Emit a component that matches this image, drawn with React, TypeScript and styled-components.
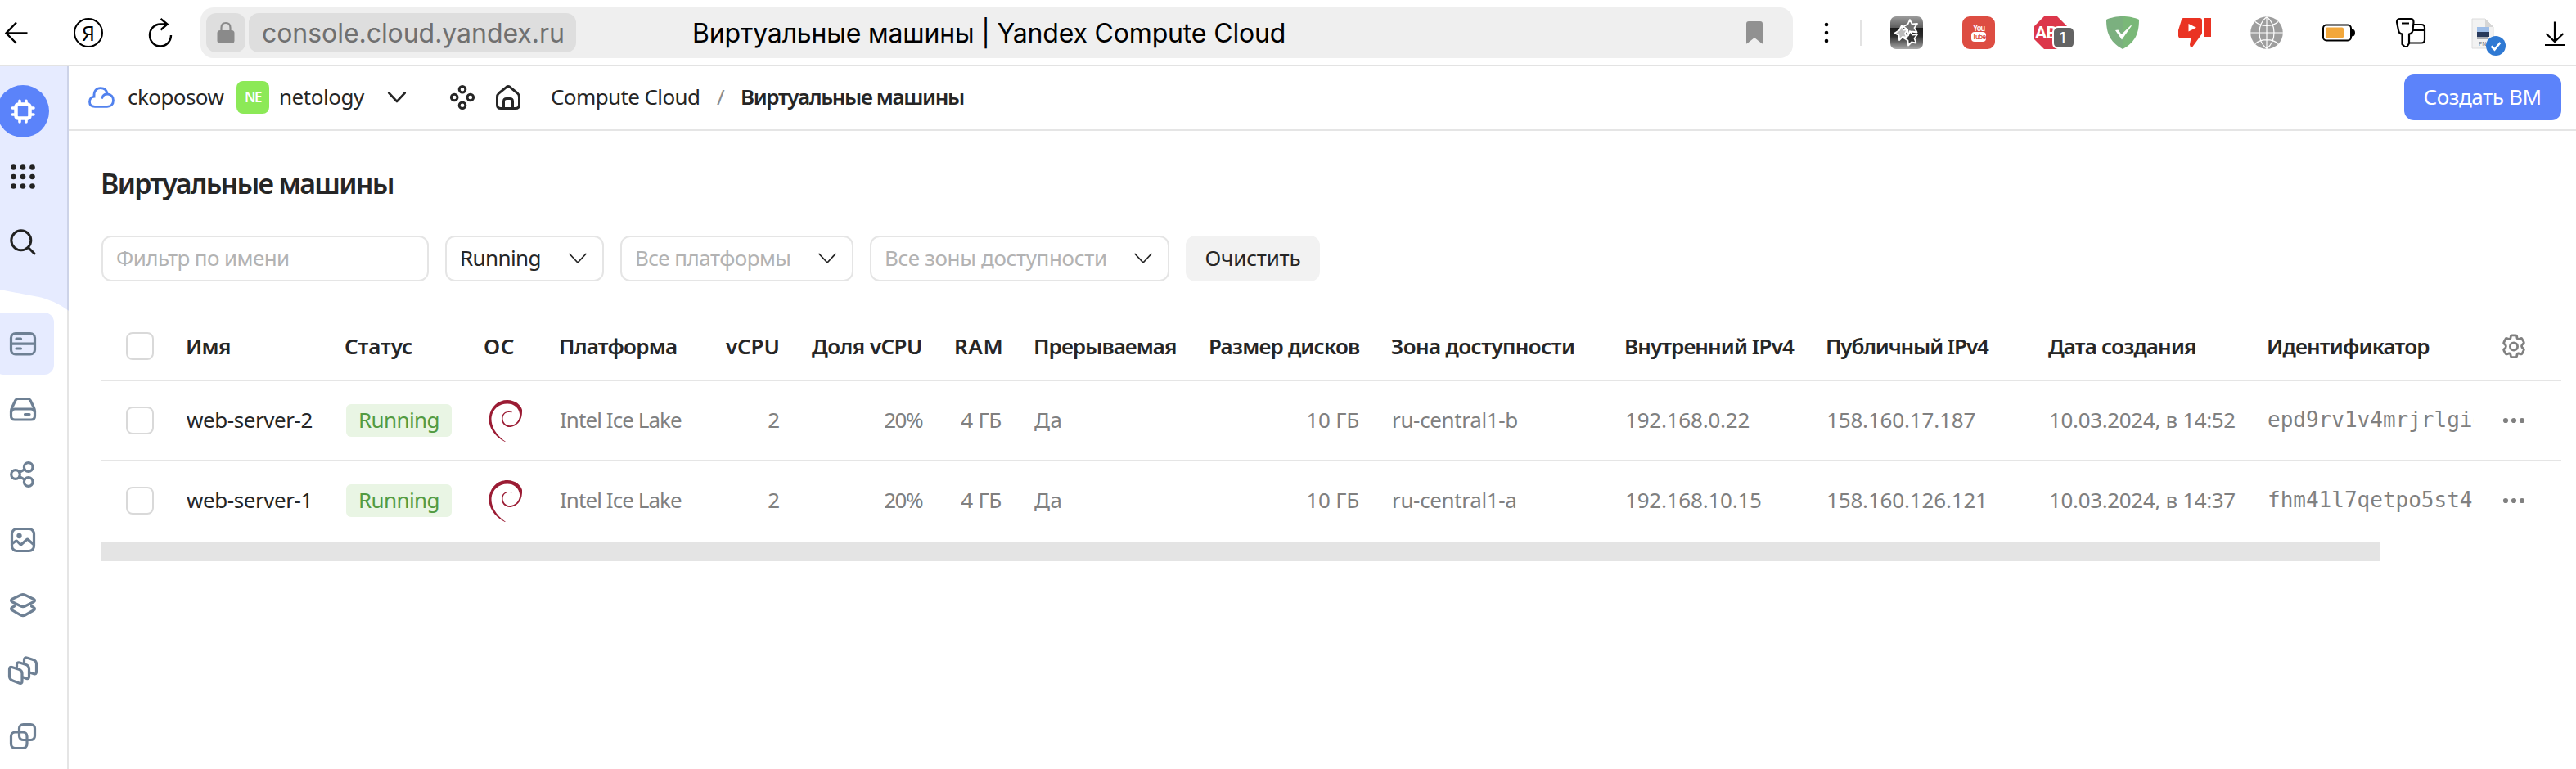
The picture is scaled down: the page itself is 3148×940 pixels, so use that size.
import React from 'react';
import styled, { createGlobalStyle, css } from 'styled-components';

const GlobalStyle = createGlobalStyle`
  * { box-sizing: border-box; }
  html, body { margin: 0; padding: 0; background: #fff; }
  body { font-family: "Noto Sans", "Open Sans", sans-serif; font-size: 26px; color: #262626; overflow: hidden; }
  svg { display: block; flex: none; overflow: visible; }
`;

const Page = styled.div`
  width: 3148px;
  height: 940px;
  display: grid;
  grid-template-rows: 81px 1fr;
  overflow: hidden;
`;

const Text = styled.span<{ $track?: number }>`
  white-space: pre;
  letter-spacing: ${p => p.$track ?? 0}px;
`;

/* ---------- Browser toolbar ---------- */

const Toolbar = styled.div`
  display: grid;
  grid-template-columns: 84px 92px 63px 1946px 82px 13px 880px;
  align-items: center;
  padding-left: 6px;
  border-bottom: 1px solid #e3e3e3;
  overflow: hidden;
`;

const YandexButton = styled.div`
  width: 36px;
  height: 36px;
  border: 2px solid #000;
  border-radius: 50%;
  display: flex;
  align-items: center;
  justify-content: center;
  color: #000;
  font-size: 25px;
  font-weight: 400;
  line-height: 28px;
`;

const AddressBar = styled.div`
  height: 62px;
  padding: 0 37px 0 7px;
  border-radius: 16px;
  background: #efefef;
  display: flex;
  align-items: center;
  font-family: Inter, "Noto Sans", sans-serif;
  font-size: 32px;
`;

const LockChip = styled.div`
  width: 48px;
  height: 48px;
  border-radius: 12px;
  background: #dedede;
  display: flex;
  align-items: center;
  justify-content: center;
`;

const UrlChip = styled.div`
  width: 400px;
  height: 48px;
  margin-left: 4px;
  padding: 1px 0 0 16px;
  border-radius: 12px;
  background: #dedede;
  color: #707070;
  line-height: 47px;
`;

const PageTitle = styled.div`
  flex: 1;
  padding: 1px 0 0 142px;
  color: #000;
`;

const MenuDots = styled.svg`
  margin-left: 38px;
`;

const Divider = styled.div`
  width: 2px;
  height: 32px;
  background: #e3e3e3;
`;

const Extensions = styled.div`
  display: grid;
  grid-template-columns: repeat(10, 88px);
  justify-items: center;
  align-items: center;
`;

const ExtensionTile = styled.div<{ $kind: 'stars' | 'tube' }>`
  width: 40px;
  height: 40px;
  display: flex;
  flex-direction: column;
  align-items: center;
  justify-content: center;
  font-family: Roboto, sans-serif;
  ${p => p.$kind === 'stars'
    ? css`border-radius: 7px; background: linear-gradient(#9c9c9c 0, #5d5d5d 35%, #1c1c1c 36%, #2b2b2b 60%, #aaa 100%);`
    : css`border-radius: 9px; background: #dd4d42;`}
`;

const YouWord = styled.span`
  color: #fff;
  font-size: 10px;
  line-height: 9px;
  font-weight: 500;
  letter-spacing: -1px;
`;

const TubeWord = styled(YouWord)`
  width: 18px;
  line-height: 12px;
  border-radius: 4px;
  background: #fff;
  color: #dd4d42;
  font-size: 9px;
  text-align: center;
`;

const BadgeHolder = styled.div`
  position: relative;
  width: 40px;
  height: 40px;
`;

const AbpLabel = styled.span`
  position: absolute;
  left: 1px;
  top: 9px;
  color: #fff;
  font-family: Roboto, sans-serif;
  font-size: 21px;
  line-height: 22px;
  font-weight: 700;
  letter-spacing: -0.5px;
`;

const CountBadge = styled.span`
  position: absolute;
  left: 22px;
  top: 12px;
  width: 28px;
  height: 28px;
  border: 2px solid #fff;
  border-radius: 7px;
  background: #636363;
  color: #fff;
  font-family: Inter, sans-serif;
  font-size: 18px;
  font-weight: 500;
  line-height: 25px;
  padding-right: 3px;
  text-align: center;
`;

/* ---------- Console shell ---------- */

const Shell = styled.div`
  display: grid;
  grid-template-columns: 84px 1fr;
  min-height: 0;
`;

const Sidebar = styled.nav`
  display: flex;
  flex-direction: column;
  border-right: 2px solid #e5e5e5;
  background: #fff;
`;

const SidebarTop = styled.div`
  margin-right: -2px;
  height: 273px;
  padding-top: 15px;
  background: #e6ebff;
  border-right: 2px solid #cdd3e8;
`;

const NavSlot = styled.div`
  width: 56px;
  height: 80px;
  display: flex;
  align-items: center;
  justify-content: center;
`;

const ServiceLogo = styled.div`
  flex: none;
  width: 64px;
  height: 64px;
  border-radius: 50%;
  background: #5b83fa;
  display: flex;
  align-items: center;
  justify-content: center;
`;

const NavItem = styled.div<{ $active?: boolean }>`
  width: 74px;
  height: 76px;
  margin: 2px 0 2px -8px;
  padding-left: 20px;
  display: flex;
  align-items: center;
  border-radius: 12px;
  background: ${p => (p.$active ? '#e6ebff' : 'transparent')};
`;

const Content = styled.main`
  display: grid;
  grid-template-rows: 79px 1fr;
  min-width: 0;
`;

const Header = styled.header`
  display: grid;
  grid-template-columns: 48px 134px 51px 133px 76px 56px 67px 203px 29px 1fr 192px;
  align-items: center;
  padding: 0 18px 2px 24px;
  border-bottom: 2px solid #e5e5e5;
`;

const HeaderLabel = styled(Text)<{ $strong?: boolean; $muted?: boolean }>`
  line-height: 36px;
  padding-bottom: 2px;
  font-weight: ${p => (p.$strong ? 600 : 400)};
  color: ${p => (p.$muted ? '#8c8c8c' : '#262626')};
`;

const FolderBadge = styled.div`
  width: 40px;
  height: 40px;
  margin-left: -1px;
  border-radius: 8px;
  background: #8ce957;
  color: #fff;
  font-size: 17px;
  font-weight: 600;
  line-height: 40px;
  letter-spacing: -1.4px;
  text-align: center;
`;

const PrimaryButton = styled.button`
  height: 56px;
  padding: 0 1px 2px 0;
  border: 0;
  border-radius: 12px;
  background: #5c83fa;
  color: #fff;
  font: 400 26px "Noto Sans", sans-serif;
  letter-spacing: -0.41px;
`;

const Body = styled.section`
  padding: 44px 18px 0 40px;
`;

const Heading = styled.h1`
  margin: 0 0 44px -1px;
  font-size: 34px;
  font-weight: 600;
  line-height: 40px;
  letter-spacing: -1.74px;
`;

const Filters = styled.div`
  display: flex;
  gap: 20px;
  height: 56px;
`;

const Field = styled.div<{ $width: number; $filled?: boolean }>`
  width: ${p => p.$width}px;
  height: 56px;
  padding: 0 19px 0 16px;
  border: 2px solid #e5e5e5;
  border-radius: 12px;
  display: flex;
  align-items: center;
  justify-content: space-between;
  color: ${p => (p.$filled ? '#262626' : '#b3b3b3')};
`;

const FieldText = styled(Text)`
  line-height: 36px;
  padding-bottom: 2px;
`;

const ClearButton = styled.button`
  width: 164px;
  height: 56px;
  margin: 0;
  padding: 0 0 2px;
  border: 0;
  border-radius: 12px;
  background: #f2f2f2;
  color: #262626;
  font: 400 26px "Noto Sans", sans-serif;
  letter-spacing: -0.2px;
`;

/* ---------- Table ---------- */

const Table = styled.div`
  margin-top: 38px;
`;

const Row = styled.div<{ $head?: boolean; $last?: boolean }>`
  display: grid;
  grid-template-columns: 84px 194px 170px 92px 204px 105px 174px 97px 214px 223px 285px 246px 272px 267px 273px 106px;
  align-items: center;
  height: ${p => (p.$head ? 84 : 98)}px;
  border-bottom: 2px solid ${p => (p.$last ? 'transparent' : '#e5e5e5')};
`;

const Cell = styled.div<{ $right?: boolean; $dark?: boolean }>`
  padding: 0 20px 2px;
  min-width: 0;
  line-height: 36px;
  color: ${p => (p.$dark ? '#262626' : '#808080')};
  text-align: ${p => (p.$right ? 'right' : 'left')};
`;

const HeadCell = styled(Cell)`
  padding: 0 21px 0 19px;
  color: #262626;
  font-weight: 600;
`;

const IdCell = styled(Cell)`
  padding: 0 0 2px;
  margin: 0 1px 0 20px;
  overflow: hidden;
  font-family: "DejaVu Sans Mono", monospace;
`;

const IconCell = styled.div<{ $pad: number }>`
  padding-left: ${p => p.$pad}px;
`;

const Checkbox = styled.div`
  width: 34px;
  height: 34px;
  margin-left: 30px;
  border: 2px solid #d9d9d9;
  border-radius: 8px;
`;

const StatusBadge = styled.div`
  width: 129px;
  height: 40px;
  margin-left: 21px;
  border-radius: 6px;
  background: #e9f5e4;
  color: #539b42;
  line-height: 38px;
  text-align: center;
  letter-spacing: -0.61px;
`;

const ScrollThumb = styled.div`
  width: 2785px;
  height: 24px;
  background: #e4e4e4;
`;

/* ---------- Icons ---------- */

const Chevron = ({ width = 1.8 }: { width?: number }) => (
  <svg width="22" height="14" viewBox="0 0 22 14" fill="none" stroke="#262626" strokeWidth={width} strokeLinecap="round" strokeLinejoin="round">
    <path d="M1.2 1.5 11 12 20.8 1.5" />
  </svg>
);

const Debian = () => (
  <svg width="52" height="52" viewBox="0 0 52 52" fill="#9b1c34">
    <path d="M25 52C11 45 5 33 5.5 24C6.5 9 17 .8 28 1C38 1.3 44.5 7 46 13C46.6 24 42 32 32 34C25 34.5 20.5 29 21 23C21.5 17 26 13.5 34 15.6L33 16.4C27 15 23 17.5 22.5 23C22.3 28 26 32 31 32.2C38 32 43 26 43.2 19C42 10 36 5.5 28 5.5C18 5.5 9.5 12 8.5 23C8 32 13 43 26 52Z" />
  </svg>
);

const navStroke = { fill: 'none', stroke: '#6e8094', strokeWidth: 3.2, strokeLinejoin: 'round' as const, strokeLinecap: 'round' as const };

const ServerIcon = () => (
  <svg width="32" height="32" viewBox="0 0 32 32" {...navStroke}>
    <rect x="1.5" y="3.5" width="29" height="25.5" rx="5.5" />
    <path d="M2 16.2h28M8 10.2h5.5M8 22h5.5" />
  </svg>
);
const DiskIcon = () => (
  <svg width="32" height="32" viewBox="0 0 32 32" {...navStroke}>
    <path d="M9.8 3.5h12.4q2 0 3 2l4 8.5q1.3 2.5 1.3 5v5.500q0 4.500-4.500 4.500h-20q-4.500 0-4.500-4.500V19q0-2.500 1.300-5l4-8.500q1-2 3-2Z" />
    <path d="M2 19q1-3 4-3h20q3 0 4 3M18.500 22.500h5.500" />
  </svg>
);
const ShareIcon = () => (
  <svg width="32" height="32" viewBox="0 0 32 32" {...navStroke}>
    <circle cx="7" cy="16" r="5.300" /><circle cx="22.700" cy="7" r="5.300" /><circle cx="22.700" cy="25" r="5.300" />
    <path d="m11.800 13.400 6.200-3.600M11.800 18.600l6.200 3.600" />
  </svg>
);
const ImageIcon = () => (
  <svg width="32" height="32" viewBox="0 0 32 32" {...navStroke}>
    <rect x="2.500" y="2.500" width="27" height="27" rx="6" />
    <path d="m3 20.500 4-3q1-.8 2 .2l4.500 4.300 7-6.300q1-.9 2 0l6.500 5.800" />
    <circle cx="11.500" cy="11" r="3.200" fill="#6e8094" stroke="none" />
  </svg>
);
const LayersIcon = () => (
  <svg width="32" height="32" viewBox="0 0 32 32" {...navStroke}>
    <path d="M13.500 3.200q2.500-1.200 5 0l10.500 5q3 1.800 0 3.600l-10.500 5.200q-2.500 1.200-5 0L3 11.800q-3-1.800 0-3.600Z" />
    <path d="M5.500 17 3 18.400q-3 1.800 0 3.600l10.500 6q2.500 1.200 5 0l10.500-6q3-1.800 0-3.600L26.500 17" />
  </svg>
);
const StackIcon = () => (
  <svg width="36" height="36" viewBox="2 0 36 36" {...navStroke}>
    <path d="M4.500 13.500 13 16.200q4 1.300 4 5V31q0 3-3 2.200L5.500 30Q1.500 28.500 1.500 24.500V16q0-3.300 3-2.500Z" />
    <path d="M10.500 13V11q0-4 3.500-3L21 10.200q4.500 1.300 4.500 5.300V25q0 3.200-3 2.500l-5-1.800" />
    <path d="M19.500 8V5q0-4 4-2.800L30.500 4.500q4 1.300 4 5.300v9.500q0 3.200-3 2.500l-5.500-1.800" />
  </svg>
);
const GroupIcon = () => (
  <svg width="32" height="32" viewBox="0 0 32 32" {...navStroke}>
    <rect x="11.500" y="1.500" width="19" height="19" rx="5" /><rect x="1.500" y="11" width="19.500" height="19.500" rx="5" />
  </svg>
);

const ChipIcon = () => (
  <svg width="30" height="30" viewBox="0 0 30 30" fill="none" stroke="#fff">
    <rect x="6.500" y="6.500" width="17" height="17" rx="3" strokeWidth="4.500" />
    <path strokeWidth="3.600" strokeLinecap="round" d="M11 2.200v3M19 2.200v3M11 25v3M19 25v3M2.200 11h3M2.200 19h3M25 11h3M25 19h3" />
  </svg>
);
const AppsIcon = () => (
  <svg width="30" height="30" viewBox="0 0 30 30" fill="#222">
    {[3.5, 15, 26.5].map(y => [3.5, 15, 26.5].map(x => <circle key={`${x}-${y}`} cx={x} cy={y} r="3.300" />))}
  </svg>
);
const SearchIcon = () => (
  <svg width="32" height="32" viewBox="0 0 32 32" fill="none" stroke="#222" strokeWidth="3" strokeLinecap="round">
    <circle cx="13.800" cy="13.800" r="12" /><path d="m22.500 22.500 7.500 7.500" />
  </svg>
);

const GearIcon = () => (
  <svg width="30" height="31" viewBox="0 0 30 31" fill="none" stroke="#808080" strokeWidth="2.800" strokeLinejoin="round">
    <path d="M12.600 1.800h4.800q1 0 1.200 1l.5 2.600q.3 1.200 1.500 1.100l2.900-.9q1-.3 1.500.6l2.200 3.900q.5.9-.2 1.500l-2 1.900q-1 1.500 0 3l2 1.900q.7.700.2 1.500L25 24.300q-.5.800-1.500.5l-2.900-.9q-1.200-.1-1.500 1.100l-.5 2.600q-.2 1-1.200 1h-4.800q-1 0-1.200-1l-.5-2.600q-.3-1.200-1.500-1.100l-2.900.9q-1 .3-1.500-.5l-2.200-4q-.5-.8.2-1.500l2-1.900q1-1.500 0-3l-2-1.900q-.7-.6-.2-1.500L5 6.200q.5-.9 1.500-.6l2.900.9q1.200.1 1.500-1.100l.5-2.600q.2-1 1.200-1Z" />
    <circle cx="15" cy="15.400" r="4.600" />
  </svg>
);
const MoreIcon = () => (
  <svg width="26" height="8" viewBox="0 0 26 8" fill="#808080">
    <circle cx="3" cy="4" r="3.100" /><circle cx="13" cy="4" r="3.100" /><circle cx="23" cy="4" r="3.100" />
  </svg>
);

/* ---------- Data ---------- */

type Column = { label: string; track: number; right?: boolean };

const columns: Column[] = [
  { label: 'Имя', track: -0.66 },
  { label: 'Статус', track: -0.1 },
  { label: 'ОС', track: 0.6 },
  { label: 'Платформа', track: -0.78 },
  { label: 'vCPU', track: -0.1, right: true },
  { label: 'Доля vCPU', track: -0.55, right: true },
  { label: 'RAM', track: 0.6, right: true },
  { label: 'Прерываемая', track: -0.95 },
  { label: 'Размер дисков', track: -0.81, right: true },
  { label: 'Зона доступности', track: -0.61 },
  { label: 'Внутренний IPv4', track: -0.91 },
  { label: 'Публичный IPv4', track: -1.17 },
  { label: 'Дата создания', track: -0.85 },
  { label: 'Идентификатор', track: -0.8 },
];

const machines = [
  { name: 'web-server-2', zone: 'ru-central1-b', inner: '192.168.0.22', outer: '158.160.17.187', date: '10.03.2024, в 14:52', id: 'epd9rv1v4mrjrlgio' },
  { name: 'web-server-1', zone: 'ru-central1-a', inner: '192.168.10.15', outer: '158.160.126.121', date: '10.03.2024, в 14:37', id: 'fhm41l7qetpo5st4' },
];

const BrowserToolbar = () => (
  <Toolbar>
    <svg width="28" height="28" viewBox="0 0 28 28" fill="none" stroke="#000" strokeWidth="2.400">
      <path d="M27.500 14.500H1.500M14 1.500 1.500 14.500 14 27" />
    </svg>
    <YandexButton>Я</YandexButton>
    <svg width="28" height="36" viewBox="0 0 28 36" fill="none" stroke="#000" strokeWidth="2.400">
      <path d="M27 21A13 13.500 0 1 1 14 7.500H22M14.500 1l8 6.500-8 7" />
    </svg>
    <AddressBar>
      <LockChip>
        <svg width="22" height="28" viewBox="0 0 22 28">
          <path d="M5.500 12V8q0-6 5.500-6t5.500 6v4" fill="none" stroke="#8a8a8a" strokeWidth="2.200" />
          <rect x=".5" y="11" width="21" height="16" rx="3.500" fill="#8a8a8a" />
        </svg>
      </LockChip>
      <UrlChip><Text $track={-0.05}>console.cloud.yandex.ru</Text></UrlChip>
      <PageTitle><Text $track={-0.17}>Виртуальные машины | Yandex Compute Cloud</Text></PageTitle>
      <svg width="20" height="28" viewBox="0 0 20 28" fill="#919191"><path d="M3 0h14q3 0 3 3v23.500q0 1.500-1.300.6L10 20 1.300 27.100Q0 28 0 26.500V3Q0 0 3 0Z" /></svg>
    </AddressBar>
    <MenuDots width="6" height="26" viewBox="0 0 6 26">
      <circle cx="3" cy="3" r="2.300" /><circle cx="3" cy="13" r="2.300" /><circle cx="3" cy="23" r="2.300" />
    </MenuDots>
    <Divider />
    <Extensions>
      <ExtensionTile $kind="stars">
        <svg width="34" height="34" viewBox="0 0 34 34" stroke="#fff" strokeWidth="1.800" strokeLinejoin="round">
          <path fill="#707070" d="m21 1 2.500 5.500 6.500-.5-3.500 5 3 5.500-6.500-1L19 19l-1-6-5-3.500 5.500-3Z" />
          <path fill="#333" d="m21 15 3 4.500 6-.5-3.500 5 2 5.500-5.500-1-4 4-.5-6-5-3 5.500-3Z" />
          <path fill="#bbb" d="m11 8 2 5.500 5-.5-3 5 2.500 5-5.500-1-4 4-.5-6-5-2.500 5.500-3.500Z" />
        </svg>
      </ExtensionTile>
      <ExtensionTile $kind="tube"><YouWord>You</YouWord><TubeWord>Tube</TubeWord></ExtensionTile>
      <BadgeHolder>
        <svg width="40" height="40" viewBox="0 0 40 40"><path fill="#dc374b" d="M12 0h16l12 12v16L28 40H12L0 28V12Z" /></svg>
        <AbpLabel>AB</AbpLabel>
        <CountBadge>1</CountBadge>
      </BadgeHolder>
      <svg width="40" height="40" viewBox="0 0 40 40">
        <path fill="#7bb07f" d="M20 0C13 0 5 1.500 0 4c0 14 3 27 20 36Z" /><path fill="#7ab878" d="M20 0c7 0 15 1.500 20 4 0 14-3 27-20 36Z" />
        <path fill="#fff" d="m11 17 3.500-.5 4 5.500L30 11l1 .5L19 28.500Z" />
      </svg>
      <svg width="40" height="36" viewBox="0 0 40 36">
        <path fill="#ea3323" d="M6 0h20q3 0 3 3v15q0 1.500-1 2.500L17.500 35q-1.500 2-3-.5l-.5-2 1.500-8H3q-3 0-3-3V15L4 2q.5-2 2-2ZM32 0h8v23h-8Z" />
        <path fill="#fff" d="m12.500 7 9.500 4.800-9.500 4.800Z" />
      </svg>
      <svg width="40" height="40" viewBox="0 0 40 40">
        <circle cx="20" cy="20" r="19.800" fill="#9e9e9e" />
        <path fill="none" stroke="#fff" strokeWidth="1.200" d="M20 0v40M0 20h40M20 .5C8 10 8 30 20 39.500M20 .5c12 9.500 12 29.500 0 39M6 6.500c7 6.500 21 6.500 28 0M6 33.500c7-6.500 21-6.500 28 0" />
      </svg>
      <svg width="40" height="22" viewBox="0 0 40 22">
        <rect x="1" y="1.500" width="34" height="19" rx="4" fill="none" stroke="#000" strokeWidth="2" />
        <rect x="4" y="4.500" width="22" height="13" rx="2" fill="#f2a73b" /><path d="M36 6.500q4 0 4 4.500t-4 4.500Z" />
      </svg>
      <svg width="36" height="36" viewBox="0 0 36 36" fill="#fff" stroke="#000" strokeWidth="2.200" strokeLinejoin="round">
        <path d="M20 8h11q4 0 4 4v14.500q0 4-4 4H16M20 15h15" fill="none" />
        <path d="M5 1h13q3.500 0 3.500 4l-1 10q-.5 4-4.500 4.500V31l-2.500 4h-3L7.500 32V19.500Q3.500 19 3 15L1 5Q1 1 5 1ZM7 6.500h9" />
      </svg>
      <BadgeHolder>
        <svg width="56" height="50" viewBox="0 0 56 50">
          <path fill="#f2f2f2" stroke="#dcdcdc" d="M7 3h16l10 10v26H7Z" /><path fill="#d6d6d6" d="M23 3v10h10Z" />
          <rect x="13" y="13" width="15" height="7" fill="#9dbde8" /><path fill="#283a5c" d="M13 19h15v6H13Z" /><path fill="#a9adb3" d="M13 25h14v3H13Z" />
          <text x="15" y="36" fontSize="7" fill="#777" fontFamily="Noto Sans">PN</text>
          <circle cx="36" cy="36" r="12" fill="#2f79d3" /><path d="m30.500 36.500 4 4 7-8.500" fill="none" stroke="#fff" strokeWidth="2.600" />
        </svg>
      </BadgeHolder>
      <svg width="24" height="32" viewBox="0 0 24 32" fill="none" stroke="#000" strokeWidth="2.200">
        <path d="M12 2.500V27M1.500 17 12 27l10.500-10M0 31h24" />
      </svg>
    </Extensions>
  </Toolbar>
);

const SideNavigation = () => (
  <Sidebar>
    <SidebarTop>
      <NavSlot><ServiceLogo><ChipIcon /></ServiceLogo></NavSlot>
      <NavSlot><AppsIcon /></NavSlot>
      <NavSlot><SearchIcon /></NavSlot>
    </SidebarTop>
    <svg width="84" height="26" viewBox="0 0 84 26">
      <path fill="#e6ebff" d="M0 0H84V26C76 20 66 14 50 9.500C44 8 20 4 0 0Z" />
      <path fill="#cdd3e8" d="M82 0h2v26l-2-1.500Z" />
    </svg>
    <NavItem $active><ServerIcon /></NavItem>
    <NavItem><DiskIcon /></NavItem>
    <NavItem><ShareIcon /></NavItem>
    <NavItem><ImageIcon /></NavItem>
    <NavItem><LayersIcon /></NavItem>
    <NavItem><StackIcon /></NavItem>
    <NavItem><GroupIcon /></NavItem>
  </Sidebar>
);

const ConsoleHeader = () => (
  <Header>
    <svg width="32" height="26" viewBox="0 0 32 26" fill="none" stroke="#5282ee" strokeWidth="2.800" strokeLinecap="round">
      <path d="M8 24.300Q1.500 24.300 1.500 18.500 1.500 13 7 12.200C6.500 5 10 1.600 15 1.600 20 1.600 22.500 4.500 23.200 8.800 28 9.500 30.500 12.500 30.500 16.800 30.500 22 27 24.300 23 24.300Z" />
      <path d="M23 9q-5 0-6 4.500" />
    </svg>
    <HeaderLabel $track={-0.57}>ckoposow</HeaderLabel>
    <FolderBadge>NE</FolderBadge>
    <HeaderLabel $track={-0.47}>netology</HeaderLabel>
    <Chevron width={2.6} />
    <svg width="30" height="30" viewBox="0 0 30 30" fill="none" stroke="#262626" strokeWidth="3">
      <circle cx="15" cy="5.200" r="3.800" /><circle cx="15" cy="24.800" r="3.800" /><circle cx="5.200" cy="15" r="3.800" /><circle cx="24.800" cy="15" r="3.800" />
    </svg>
    <svg width="30" height="30" viewBox="0 0 30 30" fill="none" stroke="#262626" strokeWidth="3" strokeLinejoin="round">
      <path d="M13 2.300q2-1.500 4 0L26.500 10q2 1.800 2 4.500V24q0 4.500-4.500 4.500H6q-4.500 0-4.500-4.500v-9.500q0-2.700 2-4.500Z" />
      <path d="M9.500 28v-8q0-3.500 3.500-3.500h4q3.500 0 3.500 3.500v8" />
    </svg>
    <HeaderLabel $track={-0.61}>Compute Cloud</HeaderLabel>
    <HeaderLabel $muted>/</HeaderLabel>
    <HeaderLabel $strong $track={-1.37}>Виртуальные машины</HeaderLabel>
    <PrimaryButton>Создать ВМ</PrimaryButton>
  </Header>
);

const MachineTable = () => (
  <Table>
    <Row $head>
      <Checkbox />
      {columns.map(c => (
        <HeadCell key={c.label} $right={c.right}><Text $track={c.track}>{c.label}</Text></HeadCell>
      ))}
      <IconCell $pad={33}><GearIcon /></IconCell>
    </Row>
    {machines.map((m, i) => (
      <Row key={m.name} $last={i === machines.length - 1}>
        <Checkbox />
        <Cell $dark><Text $track={-0.44}>{m.name}</Text></Cell>
        <StatusBadge>Running</StatusBadge>
        <IconCell $pad={20}><Debian /></IconCell>
        <Cell><Text $track={-0.94}>Intel Ice Lake</Text></Cell>
        <Cell $right><Text>2</Text></Cell>
        <Cell $right><Text $track={-1.5}>20%</Text></Cell>
        <Cell $right><Text $track={-0.29}>4 ГБ</Text></Cell>
        <Cell><Text $track={0.6}>Да</Text></Cell>
        <Cell $right><Text $track={-0.18}>10 ГБ</Text></Cell>
        <Cell><Text $track={-0.35}>{m.zone}</Text></Cell>
        <Cell><Text $track={-0.22}>{m.inner}</Text></Cell>
        <Cell><Text $track={-0.17}>{m.outer}</Text></Cell>
        <Cell><Text $track={-0.35}>{m.date}</Text></Cell>
        <IdCell><Text $track={0}>{m.id}</Text></IdCell>
        <IconCell $pad={35}><MoreIcon /></IconCell>
      </Row>
    ))}
    <ScrollThumb />
  </Table>
);

export default function App() {
  return (
    <Page>
      <GlobalStyle />
      <BrowserToolbar />
      <Shell>
        <SideNavigation />
        <Content>
          <ConsoleHeader />
          <Body>
            <Heading>Виртуальные машины</Heading>
            <Filters>
              <Field $width={400}><FieldText $track={-0.59}>Фильтр по имени</FieldText></Field>
              <Field $width={194} $filled><FieldText $track={-0.61}>Running</FieldText><Chevron /></Field>
              <Field $width={285}><FieldText $track={-0.55}>Все платформы</FieldText><Chevron /></Field>
              <Field $width={366}><FieldText $track={-0.35}>Все зоны доступности</FieldText><Chevron /></Field>
              <ClearButton>Очистить</ClearButton>
            </Filters>
            <MachineTable />
          </Body>
        </Content>
      </Shell>
    </Page>
  );
}
